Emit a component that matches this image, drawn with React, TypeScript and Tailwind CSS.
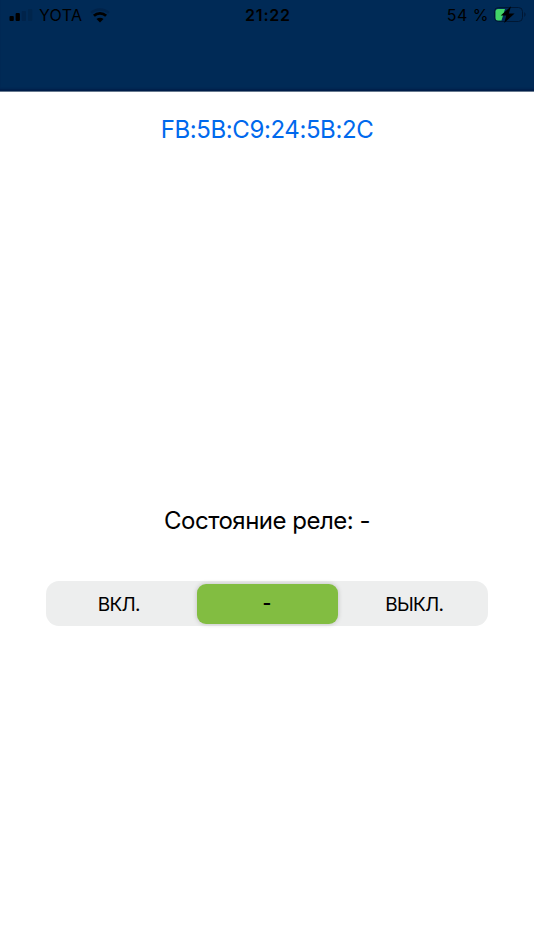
function SignalIcon() {
  return (
    <svg width="24" height="12" viewBox="0 0 24 12" className="shrink-0">
      <rect x="0.5" y="7" width="4.3" height="5" rx="1" fill="#000" />
      <rect x="6.6" y="4" width="4.3" height="8" rx="1" fill="#000" />
      <rect x="12.7" y="2" width="4.3" height="10" rx="1" fill="#00234a" />
      <rect x="19" y="0" width="4.3" height="12" rx="1" fill="#00254c" />
    </svg>
  );
}

function WifiIcon() {
  return (
    <svg width="20" height="15" viewBox="0 0 20 15" fill="none" className="shrink-0">
      <path d="M1.2 4.8C6 .3 14 .3 18.8 4.8" stroke="#00234a" strokeWidth="2.4" />
      <path d="M3.9 7.7C7.4 4.5 12.6 4.5 16.1 7.7" stroke="#000" strokeWidth="2.8" />
      <path d="M6.5 11.1C8.5 9.3 11.5 9.3 13.5 11.1L10 14.6Z" fill="#000" />
    </svg>
  );
}

function BatteryIcon() {
  return (
    <svg width="34" height="18" viewBox="0 0 34 18" fill="none" className="shrink-0">
      <rect x="1.5" y="1.5" width="28" height="14" rx="4" stroke="#001733" />
      <path d="M5 3H12L8.5 14.5H5Q2.5 14.5 2.5 12V5.5Q2.5 3 5 3Z" fill="#42d567" />
      <path d="M31.3 6Q33.8 8.5 31.3 11Z" fill="#001733" />
      <path d="M18 .3L7.7 9.5H13.3L11.2 17L21.6 7.6H15.8Z" fill="#000" />
    </svg>
  );
}

export default function App() {
  return (
    <main className="flex h-[950px] w-[534px] flex-col items-center overflow-hidden bg-white font-['Inter',sans-serif] text-black">
      <header className="h-[92px] w-full shrink-0 border-b border-[#66788e] bg-[#002a56] shadow-[inset_0_-3px_2px_-1px_#001d49]">
        <div className="grid h-[30px] grid-cols-3 items-center pl-[9px] pr-[7px] text-[16px] leading-[30px]">
          <div className="flex items-center">
            <SignalIcon />
            <span className="ml-[6px] w-[44px] whitespace-nowrap tracking-[0.3px]">YOTA</span>
            <span className="ml-[7px] mt-[1px]"><WifiIcon /></span>
          </div>
          <span className="text-center text-[16px] font-semibold tracking-[0.8px]">21:22</span>
          <div className="flex items-center justify-end">
            <span className="mr-[4px] whitespace-nowrap tracking-[0.5px]">54 %</span>
            <BatteryIcon />
          </div>
        </div>
      </header>
      <div className="mt-[20px] flex h-9 shrink-0 items-center whitespace-nowrap text-[24px] tracking-[-0.4px] text-[#0069ed]">
        FB:5B:C9:24:5B:2C
      </div>
      <p className="mt-[355px] flex h-9 shrink-0 items-center whitespace-nowrap text-[24px] tracking-[-0.5px]">
        Состояние реле: -
      </p>
      <div className="mt-[42px] flex h-[45px] w-[442px] shrink-0 items-center rounded-[13px] bg-[#edeeee] text-[19px]">
        <button className="h-full w-[150.5px] pr-[5px] pt-[3px] tracking-[-0.7px]">ВКЛ.</button>
        <button className="h-10 w-[141px] rounded-[9px] bg-[#82bd41] pt-[2px] font-semibold shadow-[0_0_5px_rgba(0,0,0,0.2)]">-</button>
        <button className="h-full flex-1 pl-[3px] pt-[3px] tracking-[-0.7px]">ВЫКЛ.</button>
      </div>
    </main>
  );
}
